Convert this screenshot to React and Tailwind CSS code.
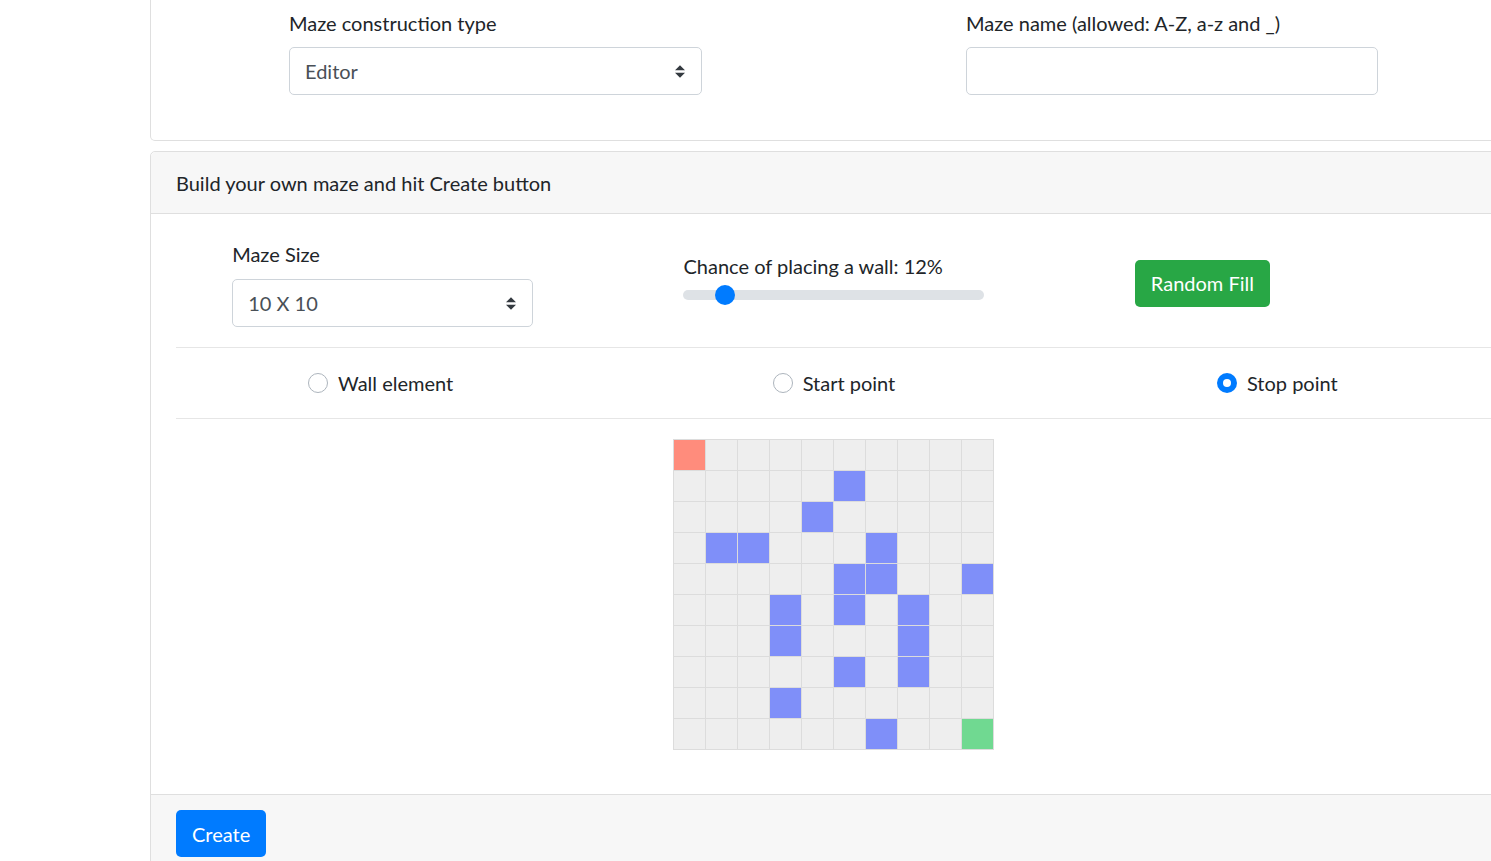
import React, { useState } from 'react';

const WALLS = [
  [1, 5], [2, 4], [3, 1], [3, 2], [3, 6], [4, 5], [4, 6], [4, 9],
  [5, 3], [5, 5], [5, 7], [6, 3], [6, 7], [7, 5], [7, 7], [8, 3], [9, 6],
];

const SelectArrow = () => (
  <svg className="w-[10px] h-[13px] text-[#343a40]" viewBox="0 0 4 5" fill="currentColor">
    <path d="M2 0L0 2h4zm0 5L0 3h4z" />
  </svg>
);

const FakeSelect = ({ value }) => (
  <div className="flex items-center justify-between h-[48px] w-full border border-[#ced4da] rounded-[5px] pl-[15px] pr-[16px] text-[#495057] bg-white">
    <span>{value}</span>
    <SelectArrow />
  </div>
);

const Radio = ({ label, checked, onClick }) => (
  <button onClick={onClick} className="flex items-center gap-[10px] leading-[30px]">
    {checked ? (
      <span className="w-[20px] h-[20px] rounded-full bg-[#007bff] flex items-center justify-center">
        <span className="w-[8px] h-[8px] rounded-full bg-white"></span>
      </span>
    ) : (
      <span className="w-[20px] h-[20px] rounded-full border border-[#adb5bd] bg-white"></span>
    )}
    <span>{label}</span>
  </button>
);

const MazeGrid = () => {
  const isWall = (r, c) => WALLS.some(([wr, wc]) => wr === r && wc === c);

  const cells = [];
  for (let r = 0; r < 10; r++) {
    for (let c = 0; c < 10; c++) {
      let color = 'bg-[#eeeeee]';
      if (r === 0 && c === 0) color = 'bg-[#ff8c7c]';
      else if (r === 9 && c === 9) color = 'bg-[#70d991]';
      else if (isWall(r, c)) color = 'bg-[#7f8ff9]';
      cells.push(<div key={`${r}-${c}`} className={color}></div>);
    }
  }

  return (
    <div className="grid grid-cols-[repeat(10,31px)] auto-rows-[30px] gap-px p-px bg-[#dcdcdc]">
      {cells}
    </div>
  );
};

const App = () => {
  const [mode, setMode] = useState('stop');

  return (
    <div className="min-h-screen overflow-hidden bg-white text-[#212529] text-[20px] leading-[30px] font-['Lato','Liberation_Sans',sans-serif]">
      <div className="ml-[150px] w-[1368px]">
        {/* Settings card */}
        <div className="border border-t-0 border-[#dfdfdf] rounded-b-[5px] px-[25px] pt-[8px] pb-[25px]">
          <div className="grid grid-cols-2 -mx-[19px]">
            <div className="px-[19px] flex justify-center">
              <div className="w-[413px] mb-[20px]">
                <label className="block mb-[9px]">Maze construction type</label>
                <FakeSelect value="Editor" />
              </div>
            </div>
            <div className="px-[19px] flex justify-center">
              <div className="w-[413px] mb-[20px] pr-px">
                <label className="block mb-[9px]">Maze name (allowed: A-Z, a-z and _)</label>
                <input
                  type="text"
                  className="block h-[48px] w-full border border-[#ced4da] rounded-[5px] px-[15px] text-[#495057] outline-none"
                />
              </div>
            </div>
          </div>
        </div>

        {/* Editor card */}
        <div className="mt-[10px] border border-[#dfdfdf] rounded-[5px]">
          <div className="bg-[#f7f7f7] border-b border-[#dfdfdf] px-[25px] pt-[16px] pb-[15px] rounded-t-[5px]">
            Build your own maze and hit Create button
          </div>

          <div className="p-[25px]">
            <div className="grid grid-cols-3 items-center -mx-[19px]">
              <div className="px-[19px] flex justify-center">
                <div className="w-[301px]">
                  <label className="block mb-[10px]">Maze Size</label>
                  <FakeSelect value="10 X 10" />
                </div>
              </div>
              <div className="px-[19px] flex justify-center">
                <div className="w-[301px] -mt-[7px]">
                  <label className="block">Chance of placing a wall: 12%</label>
                  <div className="relative h-[28px] flex items-center">
                    <div className="h-[10px] w-full rounded-full bg-[#dee2e6]"></div>
                    <div className="absolute left-[32px] top-[4px] w-[20px] h-[20px] rounded-full bg-[#007bff]"></div>
                  </div>
                </div>
              </div>
              <div className="px-[19px] flex justify-center">
                <div className="w-[301px]">
                  <button className="h-[47px] px-[16px] rounded-[5px] bg-[#28a745] text-white">
                    Random Fill
                  </button>
                </div>
              </div>
            </div>

            <hr className="my-[20px] border-t border-[#e6e6e6]" />

            <div className="grid grid-cols-3 -mx-[19px]">
              <div className="flex justify-center pr-[4px]">
                <Radio label="Wall element" checked={mode === 'wall'} onClick={() => setMode('wall')} />
              </div>
              <div className="flex justify-center">
                <Radio label="Start point" checked={mode === 'start'} onClick={() => setMode('start')} />
              </div>
              <div className="flex justify-center pr-[16px]">
                <Radio label="Stop point" checked={mode === 'stop'} onClick={() => setMode('stop')} />
              </div>
            </div>

            <hr className="my-[20px] border-t border-[#e6e6e6]" />

            <div className="flex justify-center pr-[2px] mb-[19px]">
              <MazeGrid />
            </div>
          </div>

          <div className="bg-[#f7f7f7] border-t border-[#dfdfdf] px-[25px] py-[15px]">
            <button className="h-[47px] px-[16px] rounded-[5px] bg-[#007bff] text-white">
              Create
            </button>
          </div>
        </div>
      </div>
    </div>
  );
};

export default App;
